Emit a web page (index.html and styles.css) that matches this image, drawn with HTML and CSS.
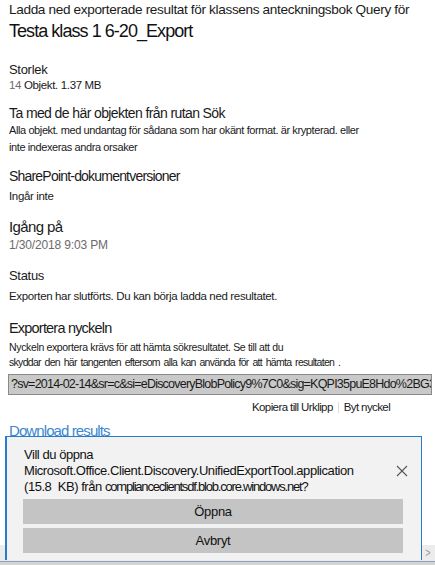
FILE: index.html
```html
<!DOCTYPE html>
<html lang="sv">
<head>
  <meta charset="UTF-8" />
  <meta name="viewport" content="width=device-width, initial-scale=1.0" />
  <title>Exportera resultat</title>
  <link rel="stylesheet" href="styles.css">
</head>
<body>
  <div class="panel">
    <div class="title">Ladda ned exporterade resultat för klassens anteckningsbok Query för</div>
    <div class="subtitle">Testa klass 1 6-20_Export</div>

    <div class="label first">Storlek</div>
    <div class="value"><span class="muted">14</span> Objekt. 1.37 MB</div>

    <div class="heading">Ta med de här objekten från rutan Sök</div>
    <div class="small">Alla objekt. med undantag för sådana som har okänt format. är krypterad. eller</div>
    <div class="small">inte indexeras andra orsaker</div>

    <div class="heading sp">SharePoint-dokumentversioner</div>
    <div class="value tall">Ingår inte</div>

    <div class="heading big">Igång på</div>
    <div class="value muted date">1/30/2018 9:03 PM</div>

    <div class="label status">Status</div>
    <div class="value tall">Exporten har slutförts. Du kan börja ladda ned resultatet.</div>

    <div class="heading big key">Exportera nyckeln</div>
    <div class="value note first-note">Nyckeln exportera krävs för att hämta sökresultatet. Se till att du</div>
    <div class="value note tight">skyddar den här tangenten eftersom alla kan använda för att hämta resultaten .</div>

    <div class="keybox">?sv=2014-02-14&amp;sr=c&amp;si=eDiscoveryBlobPolicy9%7C0&amp;sig=KQPI35puE8Hdo%2BG3c</div>

    <div class="actions">
      <span>Kopiera till Urklipp</span>
      <span class="sep"></span>
      <span>Byt nyckel</span>
    </div>

    <div class="link">Download results</div>
  </div>

  <div class="download-bar">
    <div class="bar-text">
      <div>Vill du öppna</div>
      <div class="file">Microsoft.Office.Client.Discovery.UnifiedExportTool.application</div>
      <div>(15.8 &nbsp;KB) från <span>complianceclientsdf.blob.core.windows.net?</span></div>
    </div>
    <svg class="close" width="12" height="12" viewBox="0 0 12 12">
      <path d="M1 1 L11 11 M11 1 L1 11" stroke="#555" stroke-width="1.1" fill="none"/>
    </svg>
    <div class="bar-btn">Öppna</div>
    <div class="bar-btn">Avbryt</div>
  </div>

  <div class="hscroll">
    <span class="arrow">&gt;</span>
  </div>
</body>
</html>
```

FILE: styles.css
```css
body {
  margin: 0;
  width: 435px;
  height: 565px;
  overflow: hidden;
  position: relative;
  background: #fff;
  color: #1a1a1a;
  font-family: 'Liberation Sans', Arial, sans-serif;
}
.panel {
  padding: 1px 0 0 9px;
}
.title {
  font-size: 13.6px;
  line-height: 18px;
  letter-spacing: -0.35px;
  white-space: nowrap;
}
.subtitle {
  font-size: 18px;
  line-height: 24px;
  letter-spacing: -0.95px;
  color: #111;
}
.label {
  font-size: 13px;
  line-height: 16px;
  letter-spacing: -0.3px;
}
.label.first {
  margin-top: 19px;
}
.label.status {
  margin-top: 14px;
  line-height: 18px;
}
.value {
  font-size: 11.5px;
  line-height: 14px;
  letter-spacing: -0.35px;
}
.value.tall {
  line-height: 18px;
  margin-top: 2px;
}
.value.date {
  font-size: 12px;
  line-height: 16px;
  letter-spacing: -0.15px;
}
.muted {
  color: #6b6b6b;
}
.heading {
  font-size: 14px;
  line-height: 18px;
  margin-top: 12px;
  letter-spacing: -0.6px;
}
.heading.sp {
  margin-top: 11px;
  letter-spacing: -0.8px;
}
.heading.big {
  font-size: 15px;
  line-height: 20px;
  letter-spacing: -0.6px;
}
.heading.key {
  margin-top: 13px;
  font-size: 14.5px;
  letter-spacing: -0.8px;
}
.small {
  font-size: 11px;
  line-height: 17px;
  letter-spacing: -0.4px;
}
.note {
  line-height: 15px;
  font-size: 10.5px;
  letter-spacing: -0.35px;
  white-space: nowrap;
}
.note.tight {
  letter-spacing: -0.7px;
  word-spacing: 1.5px;
}
.note.first-note {
  margin-top: 2px;
}
.keybox {
  margin: 4px 3px 0 -1px;
  height: 19px;
  line-height: 19px;
  padding: 0 2px;
  background: #c9c9c9;
  border: 1px solid #8a8a8a;
  font-size: 12.5px;
  letter-spacing: -0.78px;
  white-space: nowrap;
  overflow: hidden;
}
.actions {
  margin-top: 4px;
  padding-left: 243px;
  display: flex;
  align-items: center;
  gap: 5px;
  font-size: 11.5px;
  line-height: 16px;
  letter-spacing: -0.6px;
}
.sep {
  width: 1px;
  height: 11px;
  background: #ddd;
}
.link {
  margin-top: 7px;
  font-size: 15px;
  line-height: 18px;
  color: #3b87d0;
  letter-spacing: -0.9px;
}
.download-bar {
  position: absolute;
  left: 5px;
  top: 436px;
  width: 417px;
  height: 124px;
  background: #f2f2f2;
  border: 1px solid #2b79c9;
  border-bottom: none;
  border-left-width: 2px;
  padding: 0 17px 0 16px;
  box-sizing: border-box;
}
.bar-text {
  padding: 10px 0 0 1px;
  font-size: 13px;
  line-height: 16px;
  letter-spacing: -0.45px;
  color: #111;
}
.bar-text span {
  letter-spacing: -1.2px;
}
.close {
  position: absolute;
  right: 13px;
  top: 28px;
}
.bar-btn {
  margin-top: 4px;
  width: 380px;
  height: 25px;
  line-height: 25px;
  background: #c4c4c4;
  text-align: center;
  font-size: 13px;
  letter-spacing: -0.3px;
  color: #111;
}
.hscroll {
  position: absolute;
  left: 0;
  right: 0;
  top: 545px;
  height: 16px;
  background: #ececec;
  border-bottom: 1px solid #8fa2bd;
  z-index: -1;
}
.hscroll::after {
  content: '';
  position: absolute;
  left: 0;
  right: 0;
  top: 17px;
  height: 4px;
  background: #d4d4d4;
}
.arrow {
  position: absolute;
  right: 3px;
  top: 0;
  font-size: 13px;
  line-height: 16px;
  color: #9a9a9a;
  transform: scaleX(0.7);
}
```
